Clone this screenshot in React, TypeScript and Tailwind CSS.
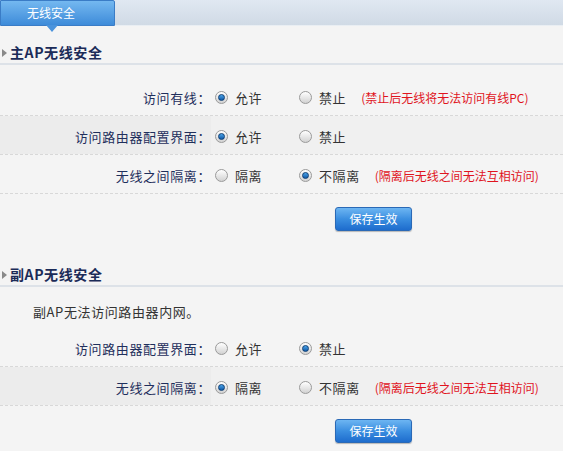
import * as React from "react";

type Opt = { text: string; checked: boolean };
type Row = { label: string; a: Opt; b: Opt; note?: string; shaded?: boolean };

function Radio({ checked }: { checked: boolean }) {
  return (
    <span className="relative inline-flex h-[13px] w-[13px] shrink-0 items-center justify-center rounded-full border border-[#9a9a9a] bg-gradient-to-b from-[#ffffff] to-[#d2d2d2]">
      {checked && (
        <span className="h-[7px] w-[7px] rounded-full border border-[#0c3d73] bg-gradient-to-b from-[#4aa3e8] to-[#0f5aa8]" />
      )}
    </span>
  );
}

function SectionHead({ title }: { title: string }) {
  return (
    <div className="flex h-[23px] items-center border-b-2 border-[#dde2e8]">
      <span className="ml-[2px] h-0 w-0 border-y-[4px] border-l-[5px] border-y-transparent border-l-[#8a8a8a]" />
      <span className="ml-[3px] text-[14px] font-bold text-[#1b2b58]">{title}</span>
    </div>
  );
}

function FormRow({ row }: { row: Row }) {
  return (
    <div className="flex h-[39px] border-b border-dashed border-[#d8d8d8]">
      <div
        className={`flex w-[211px] items-center justify-end pt-[3px] text-[#1f2f5c] ${
          row.shaded ? "bg-[#ececec]" : ""
        }`}
      >
        {row.label}
      </div>
      <div
        className={`flex flex-1 items-center pl-[4px] pt-[3px] ${row.shaded ? "bg-[#f0f0f0]" : ""}`}
      >
        <div className="flex w-[84px] items-center">
          <Radio checked={row.a.checked} />
          <span className="ml-[7px] text-[#333]">{row.a.text}</span>
        </div>
        <Radio checked={row.b.checked} />
        <span className="ml-[7px] text-[#333]">{row.b.text}</span>
        {row.note && (
          <span className="ml-[15px] text-[12px] tracking-normal text-[#e0141e]">{row.note}</span>
        )}
      </div>
    </div>
  );
}

function SaveButton() {
  return (
    <div className="ml-[335px] flex h-[24px] w-[77px] items-center justify-center rounded-[3px] border border-[#2a69b6] bg-gradient-to-b from-[#6db5f2] via-[#3a8ee0] to-[#1e6ccd] text-[12px] tracking-normal text-white shadow-[0_1px_1px_rgba(0,0,0,0.25)]">
      保存生效
    </div>
  );
}

const mainRows: Row[] = [
  {
    label: "访问有线：",
    a: { text: "允许", checked: true },
    b: { text: "禁止", checked: false },
    note: "(禁止后无线将无法访问有线PC)",
  },
  {
    label: "访问路由器配置界面：",
    a: { text: "允许", checked: true },
    b: { text: "禁止", checked: false },
    shaded: true,
  },
  {
    label: "无线之间隔离：",
    a: { text: "隔离", checked: false },
    b: { text: "不隔离", checked: true },
    note: "(隔离后无线之间无法互相访问)",
  },
];

const subRows: Row[] = [
  {
    label: "访问路由器配置界面：",
    a: { text: "允许", checked: false },
    b: { text: "禁止", checked: true },
  },
  {
    label: "无线之间隔离：",
    a: { text: "隔离", checked: true },
    b: { text: "不隔离", checked: false },
    note: "(隔离后无线之间无法互相访问)",
    shaded: true,
  },
];

export default function App() {
  return (
    <div
      className="h-[451px] w-[563px] overflow-hidden bg-[#f4f4f4] text-[13px] tracking-[0.6px]"
      style={{ fontFamily: '"Noto Sans CJK SC", "Noto Sans", sans-serif' }}
    >
      {/* top tab bar */}
      <div className="flex h-[26px] border-b border-[#e9eef3] bg-gradient-to-b from-[#e0e8f2] to-[#d0dae5]">
        <div className="relative flex h-[26px] w-[115px] items-center rounded-tr-[2px] border border-[#3a7cc6] bg-gradient-to-b from-[#74b8f0] to-[#3d8bd9] pl-[26px] text-[12px] tracking-normal text-white">
          无线安全
          <span className="absolute left-[45px] top-[24px] h-0 w-0 border-x-[6px] border-t-[7px] border-x-transparent border-t-[#4a93dc]" />
        </div>
      </div>

      {/* main AP */}
      <div className="mt-[16px]">
        <SectionHead title="主AP无线安全" />
        <div className="mt-[12px]">
          {mainRows.map((r, i) => (
            <FormRow key={`m-${i}`} row={r} />
          ))}
        </div>
        <div className="mt-[13px]">
          <SaveButton />
        </div>
      </div>

      {/* sub AP */}
      <div className="mt-[33px]">
        <SectionHead title="副AP无线安全" />
        <div className="h-[41px] pl-[33px] pt-[17px] leading-[16px] text-[#333]">副AP无法访问路由器内网。</div>
        {subRows.map((r, i) => (
          <FormRow key={`s-${i}`} row={r} />
        ))}
        <div className="mt-[13px]">
          <SaveButton />
        </div>
      </div>
    </div>
  );
}
